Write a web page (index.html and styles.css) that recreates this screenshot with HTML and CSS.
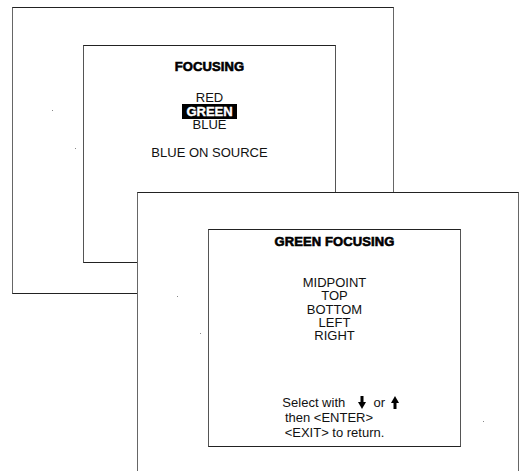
FILE: index.html
```html
<!DOCTYPE html>
<html>
<head>
<meta charset="utf-8">
<link rel="stylesheet" href="styles.css">
</head>
<body>
<div class="desk">
  <div class="win win1">
    <div class="screen screen1">
      <div class="title">FOCUSING</div>
      <div class="list list1">
        <div class="item">RED</div>
        <div class="item"><span class="sel">GREEN</span></div>
        <div class="item">BLUE</div>
      </div>
      <div class="extra">BLUE ON SOURCE</div>
    </div>
    <span class="speck s1"></span>
    <span class="speck s2"></span>
  </div>
  <div class="win win2">
    <div class="screen screen2">
      <div class="title">GREEN FOCUSING</div>
      <div class="list list2">
        <div class="item">MIDPOINT</div>
        <div class="item">TOP</div>
        <div class="item">BOTTOM</div>
        <div class="item">LEFT</div>
        <div class="item">RIGHT</div>
      </div>
      <div class="help">
        <div class="hline h1">Select with <svg class="arrow down" viewBox="0 0 8 13" width="8" height="13"><rect x="2.5" y="0" width="3" height="7"/><polygon points="0,6 8,6 4,13"/></svg> or <svg class="arrow up" viewBox="0 0 8 13" width="8" height="13"><rect x="2.5" y="6" width="3" height="7"/><polygon points="0,7 8,7 4,0"/></svg></div>
        <div class="hline h2">then &lt;ENTER&gt;</div>
        <div class="hline h3">&lt;EXIT&gt; to return.</div>
      </div>
    </div>
    <span class="speck s3"></span>
    <span class="speck s4"></span>
    <span class="speck s5"></span>
  </div>
</div>
</body>
</html>
```

FILE: styles.css
```css
html, body {
  margin: 0;
  padding: 0;
  background: #fff;
}
.desk {
  position: relative;
  width: 519px;
  height: 471px;
  overflow: hidden;
  font-family: "Liberation Sans", Arial, sans-serif;
  color: #111;
}
.win {
  position: absolute;
  box-sizing: border-box;
  background: #fff;
  border: 1px solid #666;
  border-top-color: #222;
  border-bottom-color: #222;
}
.win1 {
  left: 12px;
  top: 7px;
  width: 382px;
  height: 287px;
  padding: 37px 0 0 70px;
}
.win2 {
  left: 137px;
  top: 192px;
  width: 382px;
  height: 300px;
  padding: 36px 0 0 70px;
}
.screen {
  box-sizing: border-box;
  width: 253px;
  height: 218px;
  border: 1px solid #555;
  border-top-color: #222;
  border-bottom-color: #222;
  text-align: center;
  display: flex;
  flex-direction: column;
  align-items: center;
}
.title {
  font-weight: bold;
  font-size: 13px;
  line-height: 15px;
  -webkit-text-stroke: 0.6px #000;
  letter-spacing: 0.1px;
  color: #000;
}
.screen1 { padding-top: 13px; }
.screen2 { padding-top: 4px; }
.item {
  font-size: 13px;
  line-height: 13.5px;
}
.list1 { margin-top: 17px; }
.list2 { margin-top: 27px; }
.list2 .item { line-height: 13.25px; }
.sel {
  background: #000;
  color: #fff;
  font-weight: bold;
  padding: 0 4px;
  -webkit-text-stroke: 0.4px #fff;
}
.extra {
  font-size: 13px;
  line-height: 15px;
  margin-top: 13px;
}
.help {
  margin-top: 54px;
  display: flex;
  flex-direction: column;
  align-items: center;
}
.hline {
  font-size: 13px;
  line-height: 14.7px;
  white-space: pre;
}
.h1 { padding-left: 12px; }
.h2 { padding-right: 11px; }
.arrow {
  fill: #000;
  vertical-align: -2px;
  margin: 0 4px 0 9px;
}
.arrow.up { margin: 0 0 0 2px; }
.speck {
  position: absolute;
  width: 1px;
  height: 1px;
  background: #888;
}
.s1 { left: 39px; top: 102px; }
.s2 { left: 62px; top: 140px; }
.s3 { left: 39px; top: 103px; }
.s4 { left: 62px; top: 140px; }
.s5 { left: 345px; top: 228px; }
```
